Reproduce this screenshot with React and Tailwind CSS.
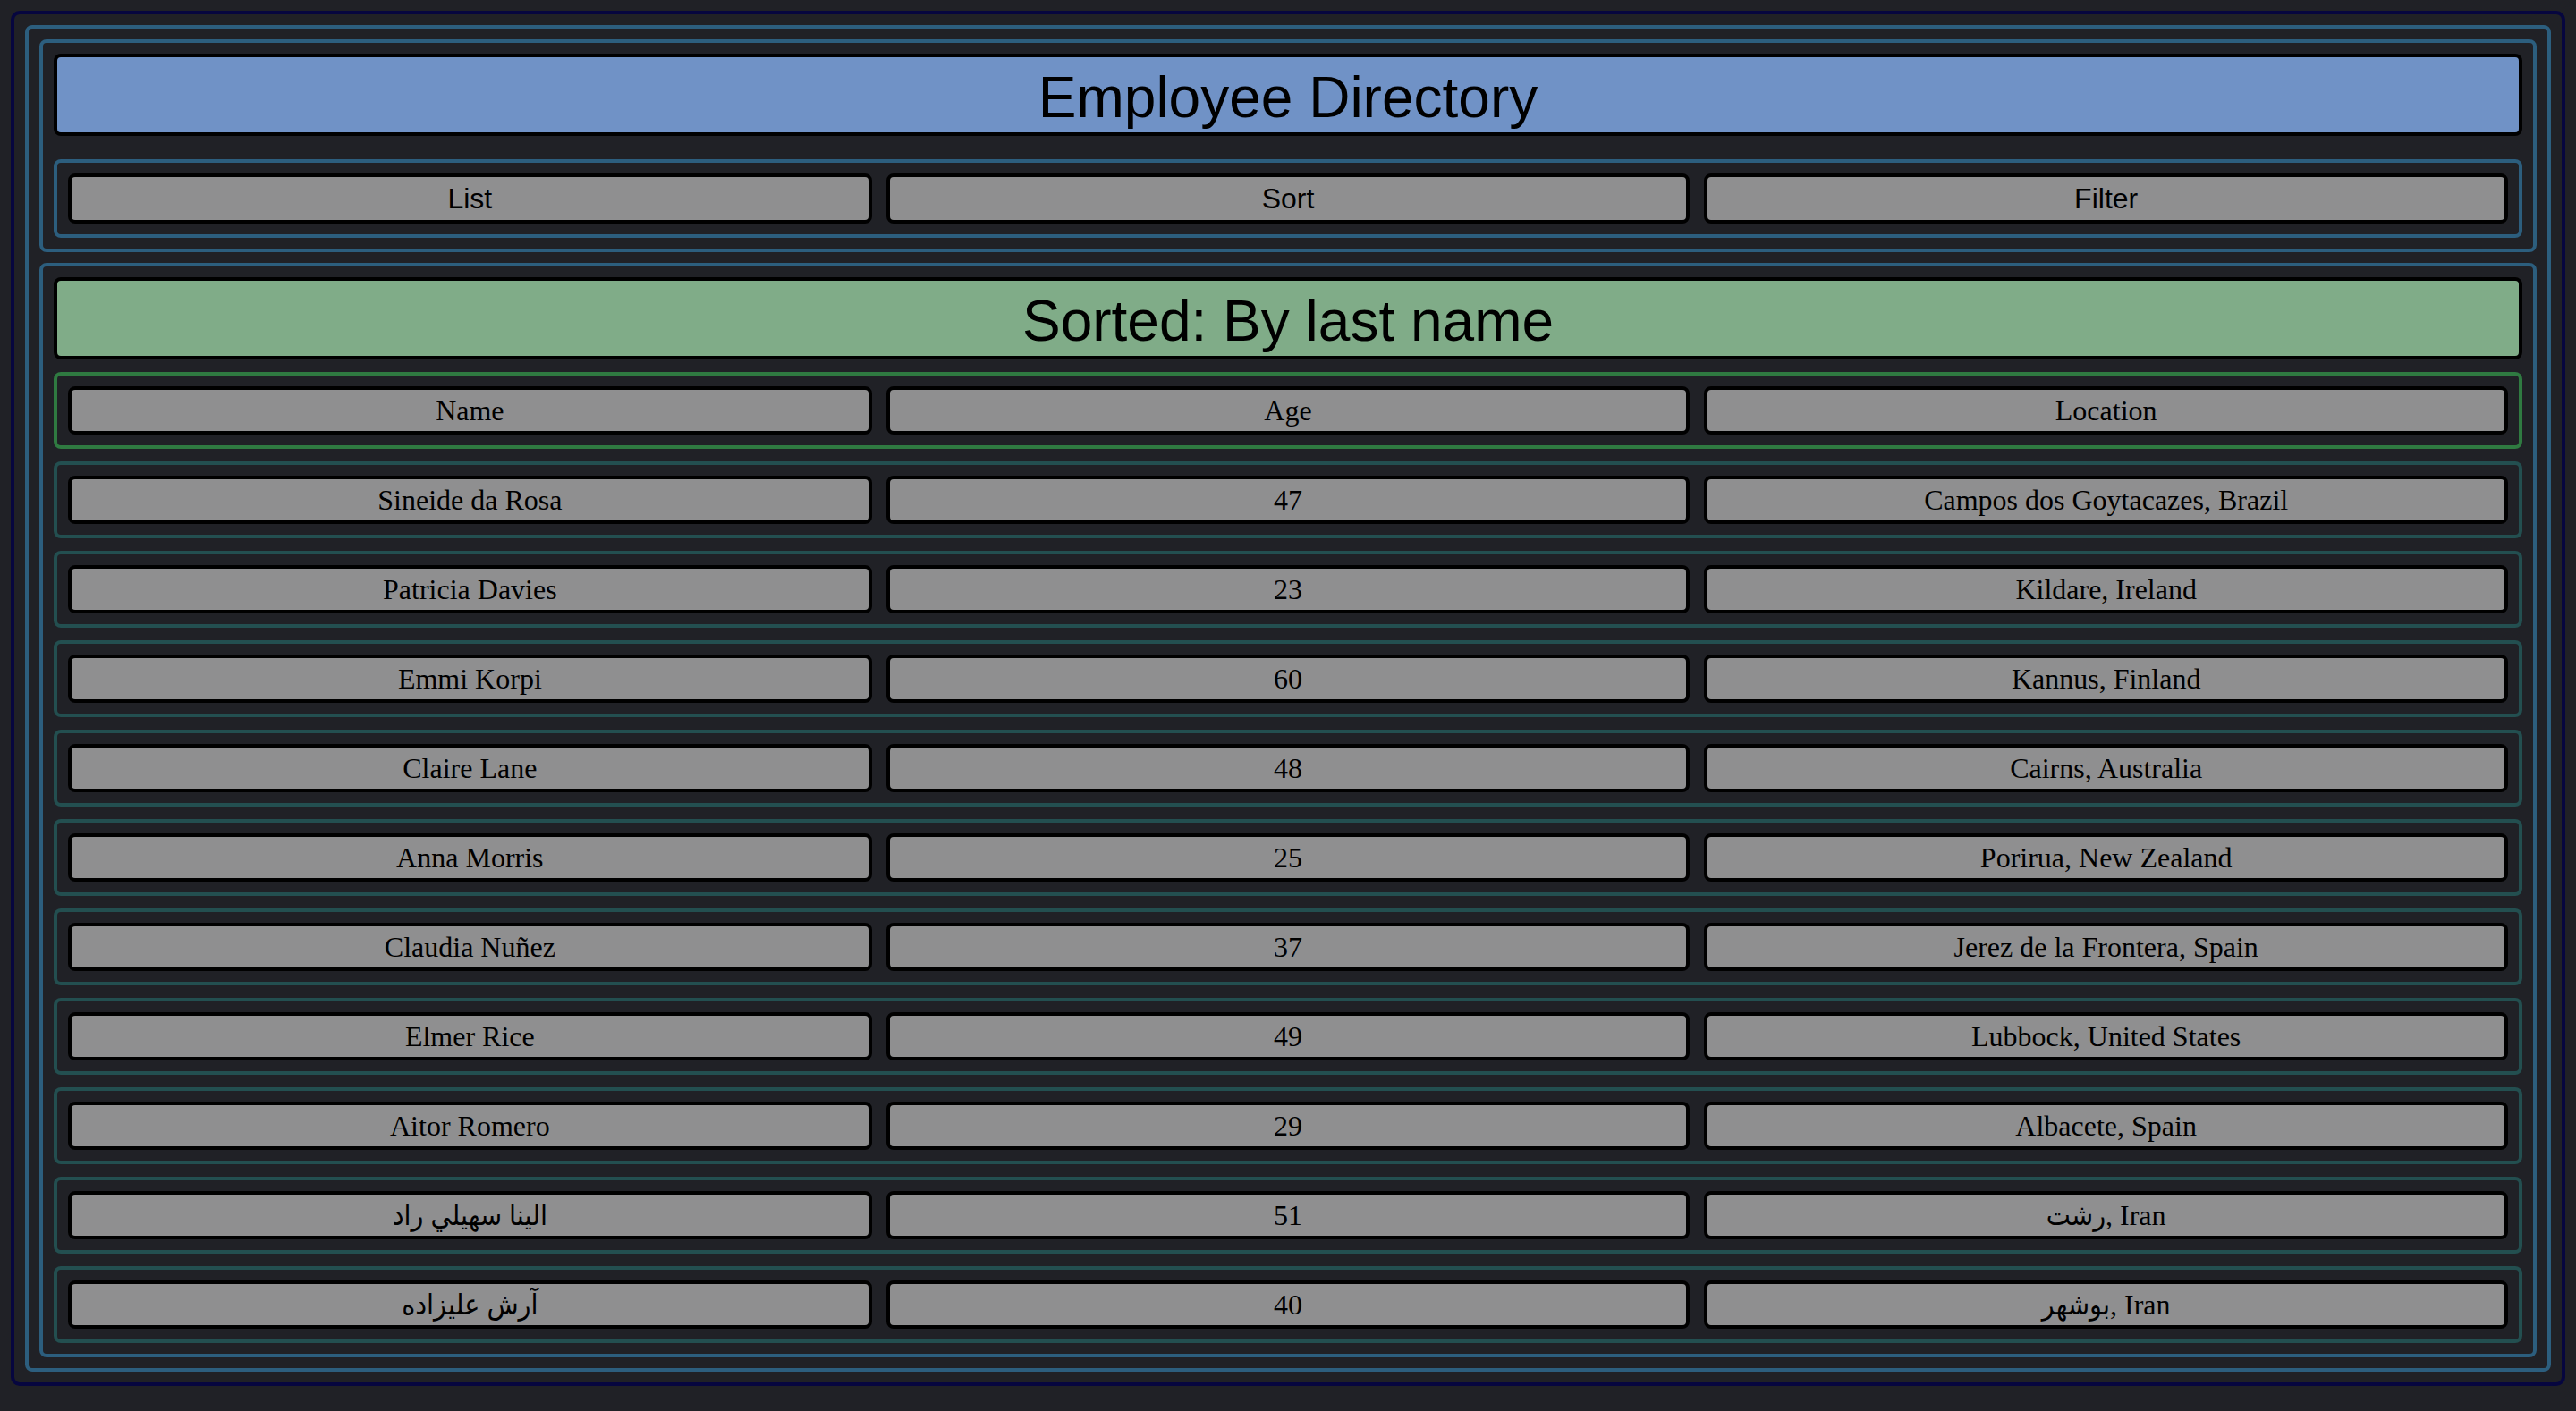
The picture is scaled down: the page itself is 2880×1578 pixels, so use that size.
import React from 'react';

const employees = [
  { name: 'Sineide da Rosa', age: 47, location: 'Campos dos Goytacazes, Brazil' },
  { name: 'Patricia Davies', age: 23, location: 'Kildare, Ireland' },
  { name: 'Emmi Korpi', age: 60, location: 'Kannus, Finland' },
  { name: 'Claire Lane', age: 48, location: 'Cairns, Australia' },
  { name: 'Anna Morris', age: 25, location: 'Porirua, New Zealand' },
  { name: 'Claudia Nuñez', age: 37, location: 'Jerez de la Frontera, Spain' },
  { name: 'Elmer Rice', age: 49, location: 'Lubbock, United States' },
  { name: 'Aitor Romero', age: 29, location: 'Albacete, Spain' },
  { name: 'الينا سهيلي راد', age: 51, location: 'رشت, Iran' },
  { name: 'آرش عليزاده', age: 40, location: 'بوشهر, Iran' },
];

const SANS = { fontFamily: '"Liberation Sans", Arial, sans-serif' };
const SERIF = { fontFamily: '"Liberation Serif", "DejaVu Sans Condensed", "DejaVu Sans", serif' };

function Cell({ children }) {
  return (
    <div
      className="h-[54px] flex items-center justify-center border-4 border-black rounded-lg bg-[#8f8f90] text-black text-[32px] leading-none whitespace-nowrap"
      style={SERIF}
    >
      {children}
    </div>
  );
}

function Row({ cells, header }) {
  return (
    <div
      className={`grid grid-cols-3 gap-4 p-3 border-4 rounded-lg ${
        header ? 'border-[#2f7a41]' : 'border-[#234f50]'
      }`}
    >
      {cells.map((c, i) => (
        <Cell key={i}>{c}</Cell>
      ))}
    </div>
  );
}

export default function App() {
  return (
    <div className="min-h-screen bg-[#202126] p-3">
      <div className="border-4 border-[#06063f] rounded-[10px] p-3">
        <div className="border-4 border-[#2c5e7e] rounded-lg p-3 flex flex-col gap-[12px]">
          <section className="border-4 border-[#2c5e7e] rounded-lg p-3">
            <div
              className="h-[92px] pt-[6px] flex items-center justify-center border-4 border-black rounded-lg bg-[#7092c6] text-black text-[64px] leading-none"
              style={SANS}
            >
              Employee Directory
            </div>
            <nav className="mt-[26px] grid grid-cols-3 gap-4 p-3 border-4 border-[#2c5e7e] rounded-lg">
              {['List', 'Sort', 'Filter'].map(label => (
                <div
                  key={label}
                  className="h-[56px] flex items-center justify-center border-4 border-black rounded-lg bg-[#8f8f90] text-black text-[32px] leading-none"
                  style={SANS}
                >
                  {label}
                </div>
              ))}
            </nav>
          </section>

          <section className="border-4 border-[#2c5e7e] rounded-lg p-3 flex flex-col gap-[14px]">
            <div
              className="h-[92px] pt-[6px] flex items-center justify-center border-4 border-black rounded-lg bg-[#80ac88] text-black text-[64px] leading-none"
              style={SANS}
            >
              Sorted: By last name
            </div>
            <Row header cells={['Name', 'Age', 'Location']} />
            {employees.map(e => (
              <Row key={e.name} cells={[e.name, e.age, e.location]} />
            ))}
          </section>
        </div>
      </div>
    </div>
  );
}
